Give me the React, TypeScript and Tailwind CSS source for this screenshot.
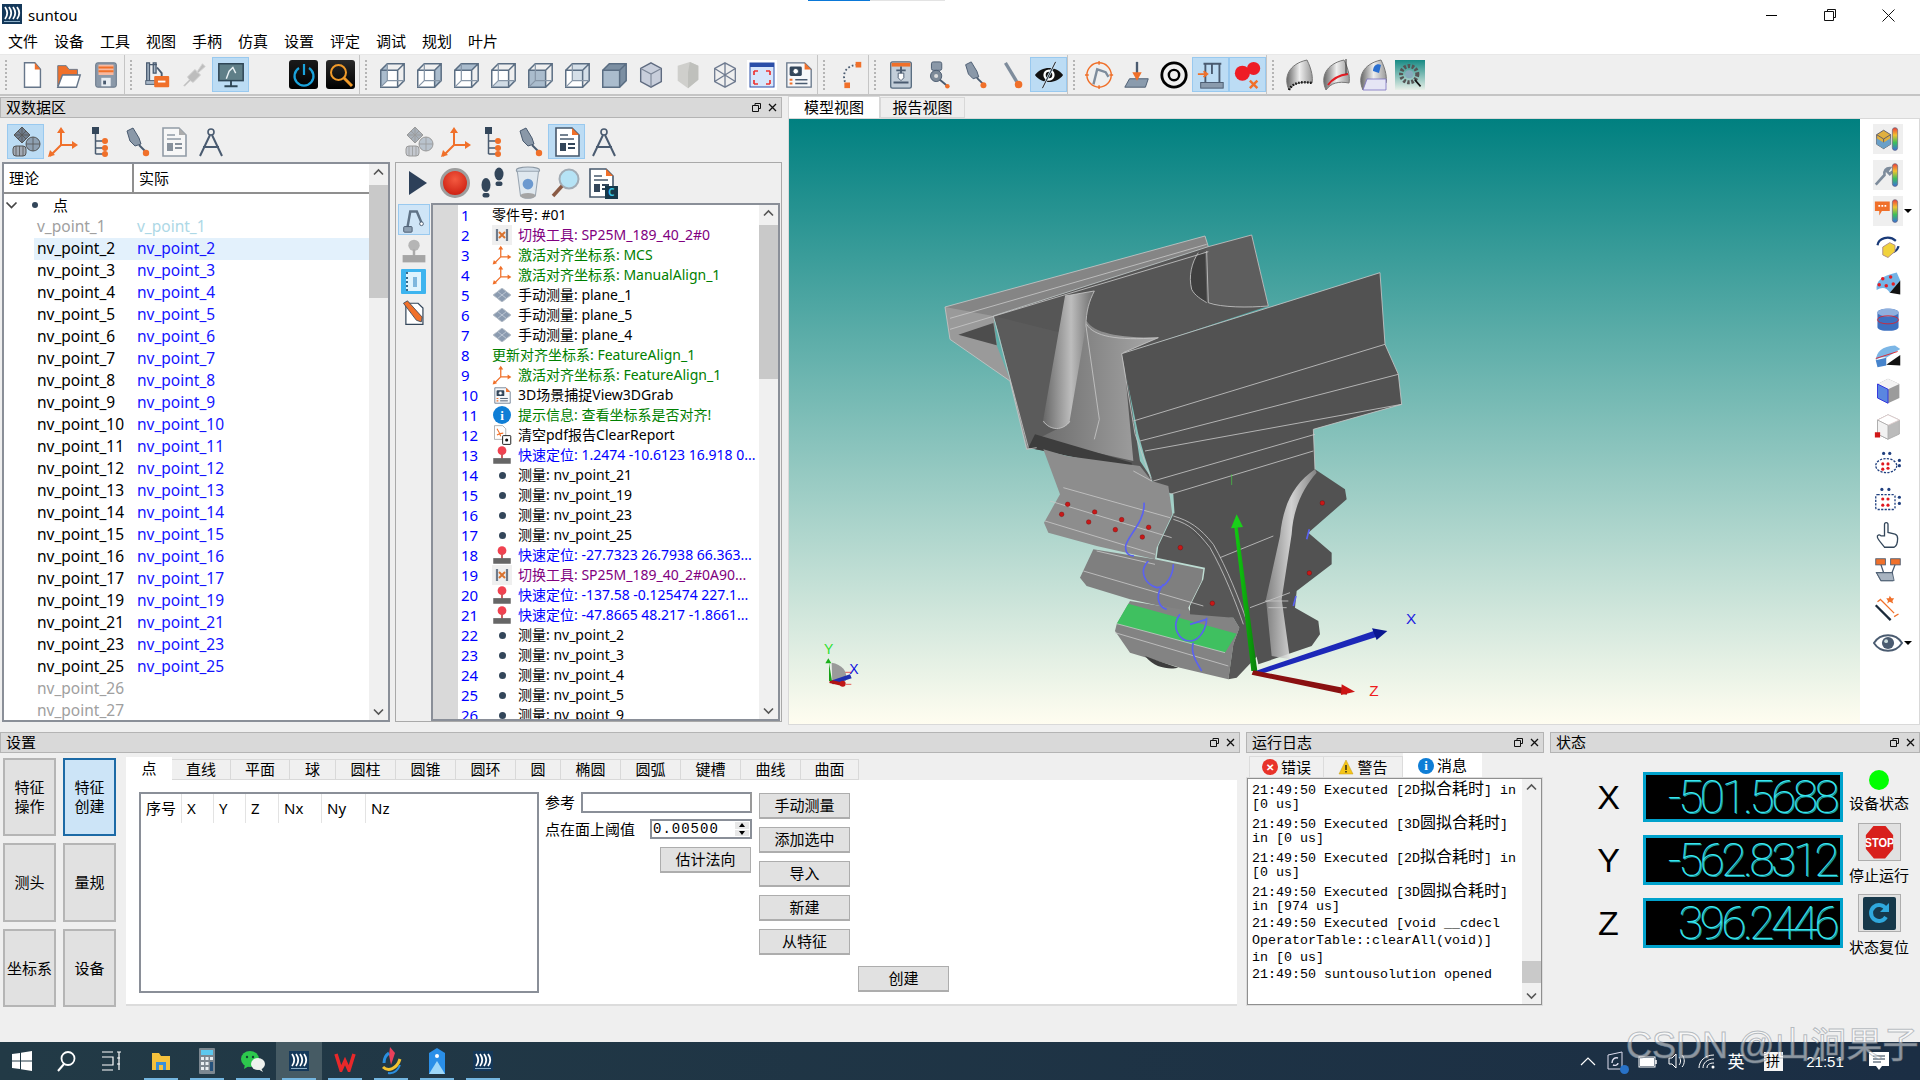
import type { ReactNode } from "react";

const slate = "#4a5b70";
const orange = "#f0702a";

function S({ s = 30, children }: { s?: number; children: ReactNode }) {
  return (
    <svg width={s} height={s} viewBox="0 0 32 32" fill="none">
      {children}
    </svg>
  );
}

// ---------- toolbar icons ----------
const NewDoc = () => (
  <S>
    <path d="M8 3h11l6 7v19H8z" fill="#fff" stroke="#66768a" strokeWidth="1.5" />
    <path d="M19 3l6 7h-6z" fill={orange} />
  </S>
);
const OpenDoc = () => (
  <S>
    <path d="M4 28V6h9l3 4h9v6H10z" fill={orange} stroke="#66768a" />
    <path d="M4 29l5-13h19l-4 13z" fill="#fff" stroke="#66768a" strokeWidth="1.5" />
  </S>
);
const SaveDoc = () => (
  <S>
    <rect x="5" y="3" width="22" height="26" rx="2" fill="#8b99a9" stroke="#5f6f82" />
    <rect x="8" y="5" width="16" height="11" fill="#f7b9a0" />
    <path d="M8 8h16M8 12h16" stroke={orange} strokeWidth="2" />
    <rect x="11" y="19" width="10" height="9" fill="#e8edf2" />
    <rect x="13" y="22" width="3" height="4" fill="#4a5b70" />
  </S>
);
const RobotTool = () => (
  <S>
    <path d="M5 3h3v20H5zM12 3h3v11h-3zM8 5h8" stroke={slate} strokeWidth="1.4" fill="#a9b8c8" />
    <path d="M16 8l5 6v4" stroke={slate} strokeWidth="2" />
    <rect x="4" y="22" width="10" height="4" fill="#a9b8c8" stroke={slate} />
    <rect x="13" y="17" width="16" height="12" rx="1" fill={orange} />
    <path d="M17 23h8" stroke="#fff" strokeWidth="2" />
  </S>
);
const Plug = () => (
  <S>
    <path d="M5 27l6-6-2-3 8-8 6 6-8 8-3-2-6 6zM19 13l6-9 3 3-8 7z" fill="#bdbdbd" stroke="#d2d2d2" />
  </S>
);
const MonitorArm = () => (
  <S>
    <rect x="3" y="4" width="26" height="18" fill="#5f7f88" stroke="#2f4656" strokeWidth="1.6" />
    <path d="M11 20l3-8 4-4 3 6M18 8l-4 4" stroke="#e9f2f5" strokeWidth="1.5" />
    <path d="M16 22v5M9 28h14" stroke="#2f4656" strokeWidth="2" />
  </S>
);
const PowerBtn = () => (
  <div className="w-[29px] h-[29px] rounded-[3px] bg-[linear-gradient(#1a1a1a,#000)] flex items-center justify-center">
    <svg width="26" height="26" viewBox="0 0 26 26" fill="none">
      <path d="M8 6a9.5 9.5 0 1 0 10 0" stroke="#1aa3dc" strokeWidth="2.2" />
      <path d="M13 2v11" stroke="#1aa3dc" strokeWidth="2.2" />
    </svg>
  </div>
);
const SearchBtn = () => (
  <div className="w-[29px] h-[29px] rounded-[3px] bg-[linear-gradient(#2a2a2a,#000)] flex items-center justify-center">
    <svg width="26" height="26" viewBox="0 0 26 26" fill="none">
      <circle cx="10.5" cy="10.5" r="7.5" stroke="#f09a2a" strokeWidth="2" />
      <path d="M16 16l8 8" stroke="#f09a2a" strokeWidth="3" />
    </svg>
  </div>
);
function Cube({ face }: { face: string }) {
  const fill = "#aabccd";
  return (
    <S>
      <path d="M4 11h18v18H4z" fill={face === "solid" || face === "front" ? fill : "#fff"} />
      {face === "left" && <path d="M4 11l7-7v18l-7 7z" fill={fill} />}
      {face === "right" && <path d="M22 11l7-7v18l-7 7z" fill={fill} />}
      {face === "top" && <path d="M4 11l7-7h18l-7 7z" fill={fill} />}
      {face === "bottom" && <path d="M4 29l7-7h18l-7 7z" fill="#d0dbe5" />}
      {face === "back" && <path d="M11 4h18v18H11z" fill="#d5dfe8" />}
      {face === "solid" && <path d="M4 11l7-7h18v18l-7 7V11z" fill="#7c8fa2" />}
      <path
        d="M4 11h18v18H4zM4 11l7-7h18v18l-7 7M22 11l7-7"
        stroke="#5b6e83"
        strokeWidth="1.6"
      />
      {face !== "solid" && <path d="M11 4v18h18M11 22l-7 7" stroke="#8796a7" strokeWidth="1.3" />}
    </S>
  );
}
const HexCube = () => (
  <S>
    <path d="M16 3l11 6v14l-11 6-11-6V9z" fill="#c8cedb" stroke="#5f6b80" strokeWidth="1.5" />
    <path d="M5 9l11 6 11-6M16 15v14" stroke="#7d8798" strokeWidth="1.2" />
  </S>
);
const Shield = () => (
  <S>
    <path d="M5 6l13-4 9 4v15l-11 9-11-8z" fill="#cfcfcc" />
    <path d="M18 2l9 4v15l-11 9V13z" fill="#bfc0bc" />
  </S>
);
const HexWire = () => (
  <S>
    <path d="M16 3l11 6v14l-11 6-11-6V9zM5 9l22 14M27 9L5 23M16 3v26" stroke="#6f7b90" strokeWidth="1.4" />
  </S>
);
const FitWin = () => (
  <div className="w-[30px] h-[30px] bg-white flex items-center justify-center">
    <svg width="26" height="26" viewBox="0 0 26 26" fill="none">
      <rect x="1" y="1" width="24" height="24" fill="#d8e6fb" stroke="#2b4ea8" />
      <rect x="1" y="1" width="24" height="4" fill="#2b4ea8" />
      <path d="M5 9h4M5 9v4M21 9h-4M21 9v4M5 22h4M5 22v-4M21 22h-4M21 22v-4" stroke="#ee3333" strokeWidth="1.7" />
    </svg>
  </div>
);
const CamDoc = ({ s = 30 }: { s?: number }) => (
  <S s={s}>
    <path d="M3 3h19l7 7v19H3z" fill="#f6f7f9" stroke="#66768a" strokeWidth="1.4" />
    <path d="M22 3l7 7h-7z" fill={orange} />
    <rect x="6" y="7" width="13" height="10" rx="1.5" fill="#33465a" />
    <circle cx="12.5" cy="12" r="3" fill="#fff" stroke="#33465a" />
    <path d="M12 21h13M12 25h13" stroke={slate} strokeWidth="1.6" />
    <path d="M6 21h3M6 25h3" stroke={orange} strokeWidth="2" />
  </S>
);
const CurveDots = () => (
  <S>
    <path d="M24 5C12 6 6 14 12 27" stroke={slate} strokeWidth="2" strokeDasharray="1.8 2.4" />
    <rect x="22" y="2" width="6" height="6" fill={orange} />
    <rect x="10" y="24" width="6" height="6" fill={orange} />
  </S>
);
const Cmm = () => (
  <S>
    <rect x="5" y="2" width="22" height="28" rx="2" fill="#c3ced9" stroke="#566a7e" strokeWidth="1.4" />
    <rect x="6" y="3" width="20" height="4" fill={orange} />
    <path d="M16 7v13M11 11h10M8 24h16" stroke={slate} strokeWidth="2" />
    <path d="M13 14h6v5l-3 3-3-3z" fill="#fff" stroke={slate} />
  </S>
);
const ProbeA = () => (
  <S>
    <rect x="9" y="2" width="11" height="9" rx="2" fill="#8a98a8" stroke="#4a5b70" />
    <circle cx="14" cy="17" r="6" fill="#7d8a98" stroke="#4a5b70" />
    <circle cx="14" cy="17" r="2.2" fill="#ddd" />
    <path d="M18 21l7 6" stroke="#4a5b70" strokeWidth="2" />
    <circle cx="26" cy="28" r="2.4" fill={orange} />
  </S>
);
const ProbeB = ({ s = 30 }: { s?: number }) => (
  <S s={s}>
    <path d="M6 5l6-3 6 10 2 6-6 2-5-5z" fill="#8a98a8" stroke="#4a5b70" />
    <path d="M18 19l6 6" stroke="#4a5b70" strokeWidth="2" />
    <circle cx="25" cy="27" r="3.2" fill={orange} />
  </S>
);
const ProbeC = () => (
  <S>
    <path d="M9 3l12 20" stroke="#7e8c9c" strokeWidth="3.5" />
    <circle cx="23" cy="26" r="4" fill={orange} />
  </S>
);
const EyeSlash = () => (
  <S>
    <path d="M1 16c7-10 23-10 30 0-7 10-23 10-30 0z" fill="#111" />
    <circle cx="16" cy="16" r="6" fill="#fff" />
    <circle cx="16" cy="16" r="3.5" fill="#111" />
    <path d="M23 2L9 30" stroke="#cfe4f6" strokeWidth="2.5" />
    <path d="M23 2L9 30" stroke="#111" strokeWidth="1" />
  </S>
);
const CircleArm = () => (
  <S>
    <circle cx="15" cy="16" r="13" stroke={orange} strokeWidth="1.5" />
    <path d="M15 1v4M15 27v4M0 16h4M26 16h4" stroke={orange} strokeWidth="1.5" />
    <path d="M9 26l4-16 9 3 3 5" stroke="#7e8c9c" strokeWidth="2.5" />
  </S>
);
const DownPlane = () => (
  <S>
    <path d="M8 20h20l-3 9H3z" fill="#8a9bad" stroke="#4a5b70" />
    <path d="M16 2v17" stroke={slate} strokeWidth="2.5" />
    <path d="M11 13h10l-5 9z" fill={orange} />
  </S>
);
const Rings = () => (
  <S>
    <circle cx="16" cy="16" r="13" stroke="#000" strokeWidth="3" />
    <circle cx="16" cy="16" r="5.5" stroke="#000" strokeWidth="2.6" />
  </S>
);
const CmmArrow = () => (
  <S>
    <rect x="5" y="24" width="24" height="6" fill="#8a9bad" stroke="#4a5b70" />
    <path d="M10 24V4h15v20M8 4h19" stroke={slate} strokeWidth="2" />
    <path d="M17 4v11" stroke={slate} strokeWidth="2" />
    <path d="M2 15h9M8 12l4 3-4 3" stroke={orange} strokeWidth="2" />
  </S>
);
const RedX = () => (
  <S>
    <circle cx="10" cy="14" r="8" fill="#ee1c25" />
    <circle cx="22" cy="9" r="7" fill="#ee1c25" />
    <path d="M18 22l8 8M26 22l-8 8" stroke={orange} strokeWidth="2.6" />
  </S>
);
const Blade = ({ accent }: { accent: string }) => (
  <S s={32}>
    <path d="M6 31C0 18 6 5 24 1c5 10 6 18 5 23C18 22 11 24 6 31z" fill="url(#bladeGrad)" stroke="#777" />
    {accent === "dots" && <path d="M6 31c3-7 12-9 23-7" stroke="#111" strokeWidth="2.4" strokeDasharray="1.5 1.5" />}
    {accent === "red" && <path d="M8 26c5-7 12-10 20-11" stroke="#e31b23" strokeWidth="2" />}
    {accent === "red" && <path d="M26 0v15" stroke="#333" strokeWidth="1" />}
    {accent === "blue" && <path d="M16 12c0-5 4-8 8-6l-2 8z" fill="#2a6fd0" />}
    {accent === "blue" && <path d="M6 31h23V20H10z" fill="#e5e5f5" stroke="#7a6fc0" strokeWidth="0.8" />}
  </S>
);
const GearScan = () => (
  <div className="w-[30px] h-[30px] bg-[linear-gradient(#178a84,#e8efe8)] flex items-center justify-center">
    <svg width="26" height="26" viewBox="0 0 32 32" fill="none">
      <circle cx="15" cy="15" r="10" stroke="#555" strokeWidth="5" strokeDasharray="3 2" />
      <circle cx="15" cy="15" r="5" fill="#8ab" />
      <path d="M22 22l7 8" stroke="#111" strokeWidth="2" />
    </svg>
  </div>
);

// ---------- dock icons ----------
const DataIco = ({ dim = false }: { dim?: boolean }) => (
  <S s={32}>
    <g opacity={dim ? 0.55 : 1} stroke="#555">
      <path d="M12 1l8 8-8 8-8-8z" fill="#6f7d8e" />
      <path d="M4 9l8 0 8 0M12 1v16M8 5l8 8M16 5l-8 8" strokeWidth="0.8" />
      <circle cx="23" cy="18" r="7" fill="#8ea0b2" />
      <path d="M16 18h14M23 11v14" strokeWidth="0.8" />
      <rect x="3" y="20" width="13" height="10" rx="3" fill="#a2aab5" />
      <path d="M6 20v10M9.5 20v10M13 20v10" strokeWidth="0.8" />
    </g>
  </S>
);
const AxisIco = ({ s = 32 }: { s?: number }) => (
  <S s={s}>
    <path d="M14 19V4M14 19h15M14 19L3 30" stroke={orange} strokeWidth="2" />
    <path d="M14 1l-4 6h8zM31 19l-6-4v8zM1 31l7-2-5-5z" fill={orange} />
  </S>
);
const TreeIco = () => (
  <S s={32}>
    <rect x="8" y="1" width="7" height="7" fill="#33465a" />
    <path d="M11.500 8v20M11.500 15h8M11.500 22h8M11.500 28h8" stroke={slate} strokeWidth="1.5" />
    <circle cx="21" cy="15" r="3" fill={orange} />
    <circle cx="21" cy="22" r="3" fill={orange} />
    <circle cx="21" cy="28" r="3" fill={orange} />
  </S>
);
const ReportIco = ({ dim = false }: { dim?: boolean }) => (
  <S s={32}>
    <g opacity={dim ? 0.55 : 1}>
      <path d="M5 2h16l7 7v21H5z" fill="#fff" stroke="#46586c" strokeWidth="1.6" />
      <path d="M21 2l7 7h-7z" fill={dim ? "#777" : orange} />
      <path d="M9 9h8M9 13h14" stroke="#46586c" strokeWidth="1.6" />
      <rect x="9" y="17" width="6" height="8" fill="#33465a" />
      <path d="M17 18h7M17 22h7" stroke="#33465a" strokeWidth="2" />
    </g>
  </S>
);
const CompassIco = () => (
  <S s={32}>
    <circle cx="16" cy="6" r="3" stroke={slate} strokeWidth="1.6" />
    <path d="M15 9L5 30M17 9l10 21M8 21h16" stroke={slate} strokeWidth="2" />
  </S>
);
const RunReport = () => (
  <div className="relative w-[30px] h-[32px] ml-[-5px]">
    <ReportIco />
    <div className="absolute right-[-3px] bottom-0 w-[13px] h-[13px] bg-[#16384a] text-[#35c3e8] text-[10px] leading-[13px] text-center font-bold">C</div>
  </div>
);
const RecBtn = () => (
  <div className="w-[30px] h-[30px] rounded-full border-[3px] border-[#9d9d9d] bg-[radial-gradient(circle_at_50%_35%,#f45a40,#c51308)]" />
);
const Steps = () => (
  <S s={32}>
    <g fill="#33465a">
      <ellipse cx="10" cy="18" rx="4.500" ry="7" />
      <rect x="6.500" y="26" width="7" height="4.500" rx="2" />
      <ellipse cx="23" cy="7" rx="4.500" ry="6.500" />
      <rect x="19.500" y="14.500" width="7" height="4.500" rx="2" />
    </g>
  </S>
);
const Bin = () => (
  <S s={34}>
    <ellipse cx="15" cy="4" rx="11" ry="3" fill="#cfdbe6" stroke="#8c98a4" />
    <path d="M5 5l3 23c3 3 11 3 14 0l3-23z" fill="#dfe8ef" stroke="#9aa6b2" />
    <circle cx="15" cy="17" r="5" fill="#3b78c2" opacity="0.7" />
    <ellipse cx="15" cy="28" rx="7" ry="2.500" fill="#a5a5a5" />
  </S>
);
const Mag = () => (
  <S s={32}>
    <circle cx="19" cy="12" r="9.500" fill="#b6e3f5" stroke="#a2acb5" strokeWidth="2" />
    <path d="M12 19L3 29" stroke="#8a5a44" strokeWidth="3.500" />
  </S>
);
const ArmIco = () => (
  <S s={30}>
    <path d="M9 24l3-17 7 0 5 12" stroke="#5f7286" strokeWidth="2.6" />
    <circle cx="24" cy="20" r="2" fill="#fff" stroke={slate} />
    <rect x="5" y="23" width="9" height="6" rx="1" fill="#8da0b3" stroke={slate} />
  </S>
);
const Joy = ({ s = 20, red = false }: { s?: number; red?: boolean }) => (
  <S s={s}>
    <circle cx="16" cy="9" r="7" fill={red ? "#f04250" : "#b5b5b5"} />
    <rect x="14.500" y="14" width="3" height="8" fill={red ? "#c55" : "#aaa"} />
    <rect x="2" y="21" width="28" height="9" fill={red ? "#666" : "#a5a5a5"} />
  </S>
);
const BookIco = () => (
  <div className="w-[25px] h-[25px] bg-[#3db4ef] rounded-[1px] flex items-center justify-center">
    <div className="w-[15px] h-[19px] bg-[#dff3fd] border-l-2 border-dotted border-[#3a6a8a] flex items-center justify-center">
      <div className="w-[4px] h-[10px] bg-[#7fb7dd]" />
    </div>
  </div>
);
const PencilDoc = () => (
  <S s={26}>
    <path d="M6 4h15l6 6v20H6z" fill="#fff" stroke="#33465a" strokeWidth="1.5" />
    <path d="M3 4l5-3 18 20-1 6-6-2z" fill={orange} stroke="#33465a" />
  </S>
);
const ToolSwap = () => (
  <div className="w-[20px] h-[20px] bg-[#efefef] flex items-center justify-center">
    <svg width="14" height="14" viewBox="0 0 14 14" fill="none">
      <path d="M2 1v12M12 1v12" stroke="#6d7a8a" strokeWidth="2.200" />
      <path d="M4 4l6 6M10 4l-6 6" stroke="#d9722e" strokeWidth="2" />
    </svg>
  </div>
);
const PlaneIco = () => (
  <S s={20}>
    <path d="M16 5L30 16 16 27 2 16z" fill="#8b9bb0" stroke="#5a6a7c" />
    <path d="M9 10.500l14 11M16 5l14 11M23 10.500l-14 11M2 16l14 11M16 5L2 16M30 16L16 27" stroke="#dfe5ec" strokeWidth="0.9" />
  </S>
);
const InfoIco = ({ s = 18 }: { s?: number }) => (
  <div
    className="rounded-full bg-[#0f7ed6] text-white font-bold flex items-center justify-center text-[13px] leading-none [font-family:'Liberation_Serif',serif]"
    style={{ width: s, height: s }}
  >
    i
  </div>
);
const PdfIco = () => (
  <S s={20}>
    <path d="M4 1h13l5 5v17H4z" fill="#fff" stroke="#888" />
    <path d="M8 6c4 6 5 9 6 12M8 16c3-2 6-3 10-3" stroke={orange} strokeWidth="1.800" />
    <rect x="17" y="17" width="13" height="14" rx="1" fill="#fff" stroke="#111" strokeWidth="1.500" />
    <circle cx="23.500" cy="24" r="2.500" fill="#111" />
  </S>
);
const Dot = () => <div className="w-[7px] h-[7px] rounded-full bg-[#33465a]" />;

// ---------- view toolbar icons ----------
const Rainbow = () => (
  <rect x="21" y="3" width="6" height="26" rx="3" fill="url(#rainbowGrad)" stroke="#667" strokeWidth="0.8" />
);
const ViewIcons: { el: ReactNode; bg?: boolean; drop?: boolean }[] = [
  { el: <S s={28}><path d="M3 11l8-5 8 5v11l-8 5-8-5z" fill="#e0b040" stroke="#556" /><path d="M3 11l8 5 8-5M11 16v11" stroke="#556" /><path d="M3 15l8 5 8-5v7l-8 5-8-5z" fill="#6aa0c8" /><Rainbow /></S>, bg: true },
  { el: <S s={28}><path d="M5 27l10-11c-1-5 2-8 6-8l-3 4 3 3 3-3" stroke="#7e8c9c" strokeWidth="3" transform="translate(-3 0)" /><Rainbow /></S>, bg: true },
  { el: <S s={28}><path d="M1 5h17v11H9l-3 5v-5H1z" fill={orange} /><path d="M5 10h9" stroke="#fff" strokeWidth="2" strokeDasharray="2 1.500" /><Rainbow /></S>, bg: true, drop: true },
  { el: <S s={28}><path d="M4 14C5 6 17 2 25 9" stroke="#1a3a78" strokeWidth="2.500" /><path d="M28 15c-1 6-8 9-14 7" stroke="#1a3a78" strokeWidth="2.500" /><path d="M10 16l8-5 6 3v7l-8 7-6-3z" fill="#f1d23c" stroke="#a88" /></S> },
  { el: <S s={28}><path d="M3 24C2 14 8 8 26 4l4 9-12 14c-3-6-9-7-15-3z" fill="#74b4e6" /><path d="M18 27l12-14v16z" fill="#111" /><g fill="#e51c23"><circle cx="10" cy="11" r="2" /><circle cx="19" cy="9" r="2" /><circle cx="14" cy="19" r="2" /><circle cx="22" cy="17" r="2" /><circle cx="6" cy="18" r="2" /></g></S> },
  { el: <S s={26}><path d="M3 8c0-6 26-6 26 0v18c0 6-26 6-26 0z" fill="#3d70c0" /><ellipse cx="16" cy="8" rx="13" ry="5" fill="#8fb0de" /><ellipse cx="16" cy="17" rx="13" ry="5" stroke="#e51c23" /></S> },
  { el: <S s={28}><path d="M2 22C3 12 9 6 24 5l6 4-16 10c-4-1-9 0-12 3z" fill="#7cb6e6" /><path d="M2 22l2 8 10-2v-9z" fill="#4684cc" /><path d="M14 27l16-11v12z" fill="#111" /><path d="M2 20l25-8" stroke="#e51c23" /></S> },
  { el: <S s={28}><path d="M16 2l13 6v16l-13 6-12-6V8z" fill="#9b9b9b" /><path d="M4 8l12-6 13 6-13 6z" fill="#f3f3f3" /><path d="M4 8l12 6v16l-12-6z" fill="#5a86e0" stroke="#2a2ae0" /></S> },
  { el: <S s={28}><path d="M16 2l13 6v16l-13 6-12-6V8z" fill="#bbb" stroke="#aaa" /><path d="M4 8l12-6 13 6-13 6z" fill="#fff" stroke="#dcc" /><path d="M4 8l12 6v16l-12-6z" fill="#f2f2f2" stroke="#aaa" /><rect x="1" y="22" width="6" height="6" fill="#d01818" /></S> },
  { el: <S s={28}><ellipse cx="14" cy="19" rx="12" ry="8" stroke="#1f3f7f" strokeWidth="1.500" strokeDasharray="2.500 1.500" /><g fill="#e01820"><circle cx="10" cy="17" r="1.800" /><circle cx="16" cy="17" r="1.800" /><circle cx="10" cy="23" r="1.800" /><circle cx="16" cy="22" r="1.800" /></g><g fill="#1f3f7f"><circle cx="11" cy="5" r="1.800" /><circle cx="18" cy="5" r="1.800" /><circle cx="29" cy="13" r="1.800" /><circle cx="29" cy="19" r="1.800" /></g></S> },
  { el: <S s={28}><rect x="2" y="11" width="22" height="17" rx="2" stroke="#1f3f7f" strokeWidth="1.500" strokeDasharray="2.500 1.500" /><g fill="#e01820"><circle cx="10" cy="16" r="1.800" /><circle cx="16" cy="16" r="1.800" /><circle cx="10" cy="23" r="1.800" /><circle cx="16" cy="23" r="1.800" /></g><g fill="#1f3f7f"><circle cx="9" cy="5" r="1.800" /><circle cx="17" cy="5" r="1.800" /><circle cx="29" cy="14" r="1.800" /><circle cx="29" cy="21" r="1.800" /></g></S> },
  { el: <S s={28}><path d="M12 17V4c0-3 4-3 4 0v9l8 2c3 1 3 3 3 5 0 5-2 9-4 10H12c-2-3-7-8-8-11-1-3 2-4 4-2z" fill="#fff" stroke="#33465a" strokeWidth="1.500" /></S> },
  { el: <S s={28}><rect x="2" y="2" width="11" height="7" fill={orange} stroke="#4a5b70" /><rect x="19" y="2" width="11" height="7" fill={orange} stroke="#4a5b70" /><path d="M8 9l3 9M24 9l-5 13M3 18h18v9H8z" stroke="#4a5b70" strokeWidth="1.500" /><path d="M3 18l5 9h15l-2-9z" fill="#a8b4c1" stroke="#4a5b70" /></S> },
  { el: <S s={28}><path d="M2 14l17 17" stroke="#1b2b3a" strokeWidth="2.600" /><path d="M8 8l15 15M4 10l4-3M23 27l5-3" stroke={orange} strokeWidth="1.500" /><path d="M18 3l2 3 3 0-2 3 1 3-4-2-3 2 1-3-2-3h3z" fill={orange} /></S> },
  { el: <S s={30}><path d="M1 16c7-11 23-11 30 0-7 11-23 11-30 0z" fill="#fff" stroke="#4a5b70" strokeWidth="2" /><circle cx="16" cy="16" r="6.500" fill="#4a5b70" /><circle cx="14" cy="14" r="2" fill="#cdd" /></S>, drop: true },
];

// ---------- taskbar icons ----------
const SunLogo = ({ s = 20 }: { s?: number }) => (
  <svg width={s} height={s} viewBox="0 0 20 20" fill="none">
    <rect width="20" height="20" fill="#14385a" />
    <path d="M3 3c3 4 3 8 0 12M7 3c3 4 3 8 0 12M11 3c3 4 3 8 0 12M15 3c3 4 3 8 0 12" stroke="#fff" strokeWidth="1.800" />
    <rect x="2" y="17" width="16" height="1" fill="#8fb0c8" />
  </svg>
);

function Tool({ children, on = false, w = "w-[37px]" }: { children?: ReactNode; on?: boolean; w?: string }) {
  return (
    <div
      className={`${w} h-[35px] flex items-center justify-center shrink-0 ${on ? "bg-[#bcdcf4] border border-[#99c9ef]" : ""}`}
    >
      {children}
    </div>
  );
}
const Handle = () => <div className="w-[2px] h-[30px] ml-[5px] mr-[6px] border-l-2 border-dotted border-[#b5b5b5] shrink-0" />;
const Sep = () => <div className="w-[1px] h-[40px] bg-[#c5c5c5] shrink-0" />;

function DockTitle({ title, w, icons = true }: { title: string; w: string; icons?: boolean }) {
  return (
    <div className={`${w} h-[21px] bg-[#d9d9d9] border border-[#b4b4b4] flex items-center pl-[5px] shrink-0`}>
      <span className="text-[15px] leading-none">{title}</span>
      {icons && (
        <div className="ml-auto flex items-center gap-[7px] pr-[4px]">
          <svg width="9" height="9" viewBox="0 0 9 9" fill="none">
            <path d="M3 2V.5h5.500v5H7M.5 2.500h6v6h-6z" stroke="#111" />
          </svg>
          <svg width="9" height="9" viewBox="0 0 9 9" fill="none">
            <path d="M1 1l7 7M8 1L1 8" stroke="#111" strokeWidth="1.300" />
          </svg>
        </div>
      )}
    </div>
  );
}

function ScrollBar({ top, h }: { top: number; h: number }) {
  return (
    <div className="w-[19px] h-full bg-[#f0f0f0] relative shrink-0">
      <svg className="absolute left-[4px] top-[4px]" width="11" height="8" viewBox="0 0 11 8" fill="none">
        <path d="M1 6.500l4.500-4.500 4.500 4.500" stroke="#555" strokeWidth="1.600" />
      </svg>
      <div className="absolute left-0 right-0 bg-[#c9c9c9]" style={{ top, height: h }} />
      <svg className="absolute left-[4px] bottom-[4px]" width="11" height="8" viewBox="0 0 11 8" fill="none">
        <path d="M1 1.500l4.500 4.500 4.500-4.500" stroke="#555" strokeWidth="1.600" />
      </svg>
    </div>
  );
}

const points = [2, 3, 4, 5, 6, 7, 8, 9, 10, 11, 12, 13, 14, 15, 16, 17, 19, 21, 23, 25];

type Row = { t: string; c: string; i?: ReactNode };
const black = "text-black";
const green = "text-[#008000]";
const blue = "text-[#0000ff]";
const purple = "text-[#800080]";
const probe = <Joy red />;
const rows: Row[] = [
  { t: "零件号:  #01", c: black },
  { t: "切换工具: SP25M_189_40_2#0", c: purple, i: <ToolSwap /> },
  { t: "激活对齐坐标系: MCS", c: green, i: <AxisIco s={20} /> },
  { t: "激活对齐坐标系: ManualAlign_1", c: green, i: <AxisIco s={20} /> },
  { t: "手动测量: plane_1", c: black, i: <PlaneIco /> },
  { t: "手动测量: plane_5", c: black, i: <PlaneIco /> },
  { t: "手动测量: plane_4", c: black, i: <PlaneIco /> },
  { t: "更新对齐坐标系: FeatureAlign_1", c: green },
  { t: "激活对齐坐标系: FeatureAlign_1", c: green, i: <AxisIco s={20} /> },
  { t: "3D场景捕捉View3DGrab", c: black, i: <CamDoc s={19} /> },
  { t: "提示信息: 查看坐标系是否对齐!", c: green, i: <InfoIco /> },
  { t: "清空pdf报告ClearReport", c: black, i: <PdfIco /> },
  { t: "快速定位: 1.2474 -10.6123 16.918 0...", c: blue, i: probe },
  { t: "测量: nv_point_21", c: black, i: <Dot /> },
  { t: "测量: nv_point_19", c: black, i: <Dot /> },
  { t: "测量: nv_point_23", c: black, i: <Dot /> },
  { t: "测量: nv_point_25", c: black, i: <Dot /> },
  { t: "快速定位: -27.7323 26.7938 66.363...", c: blue, i: probe },
  { t: "切换工具: SP25M_189_40_2#0A90...", c: purple, i: <ToolSwap /> },
  { t: "快速定位: -137.58 -0.125474 227.1...", c: blue, i: probe },
  { t: "快速定位: -47.8665 48.217 -1.8661...", c: blue, i: probe },
  { t: "测量: nv_point_2", c: black, i: <Dot /> },
  { t: "测量: nv_point_3", c: black, i: <Dot /> },
  { t: "测量: nv_point_4", c: black, i: <Dot /> },
  { t: "测量: nv_point_5", c: black, i: <Dot /> },
  { t: "测量: nv_point_9", c: black, i: <Dot /> },
];

const featureTabs: [string, string][] = [
  ["直线", "w-[59px]"],
  ["平面", "w-[59px]"],
  ["球", "w-[46px]"],
  ["圆柱", "w-[60px]"],
  ["圆锥", "w-[60px]"],
  ["圆环", "w-[60px]"],
  ["圆", "w-[45px]"],
  ["椭圆", "w-[60px]"],
  ["圆弧", "w-[60px]"],
  ["键槽", "w-[60px]"],
  ["曲线", "w-[60px]"],
  ["曲面", "w-[58px]"],
];

const tableCols: [string, string][] = [
  ["序号", "w-[41px]"],
  ["X", "w-[32px]"],
  ["Y", "w-[32px]"],
  ["Z", "w-[33px]"],
  ["Nx", "w-[43px]"],
  ["Ny", "w-[44px]"],
  ["Nz", "w-[60px]"],
];

const C = ({ children }: { children: ReactNode }) => (
  <span className="text-[16px] leading-none [font-family:'Noto_Sans_CJK_SC',sans-serif]">{children}</span>
);

const logLines: ReactNode[] = [
  <>21:49:50 Executed [2D<C>拟合耗时</C>] in</>,
  "[0 us]",
  <>21:49:50 Executed [3D<C>圆拟合耗时</C>]</>,
  "in [0 us]",
  <>21:49:50 Executed [2D<C>拟合耗时</C>] in</>,
  "[0 us]",
  <>21:49:50 Executed [3D<C>圆拟合耗时</C>]</>,
  "in [974 us]",
  "21:49:50 Executed [void __cdecl",
  "OperatorTable::clearAll(void)]",
  "in [0 us]",
  "21:49:50 suntousolution opened",
];

function FormBtn({ label, w = "w-[91px]" }: { label: string; w?: string }) {
  return (
    <div className={`${w} h-[26px] bg-[#e1e1e1] border border-[#adadad] border-b-2 flex items-center justify-center text-[15px] leading-none shrink-0`}>
      {label}
    </div>
  );
}

function SideBtn({ label, on = false }: { label: ReactNode; on?: boolean }) {
  return (
    <div
      className={`flex items-center justify-center text-center text-[15px] leading-[19px] border-2 ${
        on ? "bg-[#cce4f7] border-[#1c6aa6]" : "bg-[#e1e1e1] border-[#b5b5b5]"
      }`}
    >
      {label}
    </div>
  );
}

// model in zoomed coordinates (3x, origin 900,230)
function Model() {
  const dots = [[503, 820], [485, 850], [584, 843], [566, 873], [665, 866], [646, 896], [746, 889], [727, 918], [841, 950], [937, 1117], [1267, 816], [1228, 1026]];
  return (
    <g transform="translate(900 230) scale(0.33333)">
      <path d="M135 228L915 15l10 32L280 255l10 88-115-32-25 14z" fill="#858585" />
      <path d="M135 228l15 97 180 125 50 205 30-5L290 343 280 255z" fill="#9a9a9a" />
      <path d="M175 311l105-35 10 67z" fill="#4d4d4d" />
      <path d="M280 255L925 47l130-35 50 213-435 143 50 322 40 60-355-125z" fill="#565656" />
      <path d="M925 47l130-35 50 213c-60 10-150 5-190-20-30-20-50-80-15-130z" fill="#5e5e5e" />
      <path d="M895 65c-20 30-30 70-20 110 10 20 30 30 45 40l-5-150z" fill="#3f3f3f" />
      <path d="M283 255l100 395 310 55 -25-337c-50 10-110 0-108-44z" fill="#5b5b5b" />
      <path d="M560 270c20 35 90 50 215 50l-105 45 30 325-290-65 90-45z" fill="url(#coneGrad)" />
      <path d="M495 195l88-15c-15 30-25 60-25 105l-50 290c-30 30-60 15-80 0z" fill="url(#cylGrad)" />
      <path d="M385 650l20-40 290 85v20z" fill="#3d3d3d" />
      <path d="M665 368L1440 125l15 215 40 90 10 90-265 75 5 120 90 60 5 30-115 100 70 60 0 35-105 80-5 50 70 40 5 40-25 35-160 55-30-130-85-160-135-140-5-80-55-20-30-90-20-70z" fill="#525252" />
      <path d="M430 655l70 20 220 30 35 45 50 15 12 85-47 100-5 35-175-40-145-40-13-30 48-85z" fill="#8d8d8d" />
      <path d="M580 955l185 30 145 30-5 35-40 80 5 15-180-40-130-40-20-25z" fill="#7f7f7f" />
      <path d="M690 1110l310 50 18 30-18 50-15 105-145-35-150-45-45-65 5-20z" fill="#838383" />
      <path d="M685 1118l325 90-35 57-325-87z" fill="#3fc060" />
      <path d="M735 1275c30 40 80 40 100 35l-60-20z" fill="#3d3d3d" />
      <path d="M1010 1340l-25 5 15-105 18-50-18-30-130-10 0-25 40-80 5-35-145-30 5-35 47-100 135 140 85 160 30 130z" fill="#575757" />
      <path d="M1245 715C1180 760 1150 820 1140 915L1098 1105L1115 1275L1170 1285L1145 1105L1175 910C1180 830 1210 770 1250 725z" fill="url(#tubeGrad)" opacity="0.85" />
      <g stroke="#c6c6c6" strokeWidth="2.500" fill="none">
        <path d="M135 228L915 15M925 47l130-35 50 213M915 15l10 32M150 262L920 40M150 295L925 62M280 255L925 47" />
        <path d="M135 228l15 97 180 125 50 205 30-5M280 255l105 395M665 368L1440 125l15 215 40 90 10 90-265 75 5 120" />
        <path d="M700 570L1455 340M720 630L1495 430M735 660L1505 520M760 750L1245 610M810 790L1240 660" />
        <path d="M665 368l40 240 50 142-55-30M560 280c20 35 90 50 215 40l-105 45M495 195l88-15c-15 30-25 60-25 105l40 280-15 60M430 570c20 30 60 30 80 0" />
        <path d="M450 810l365 110M435 870l330 100M550 1020l360 105M650 1178l325 87M645 1205l340 100M490 770l320 90M590 960l175 40" />
        <path d="M820 855c50 15 80 35 120 85 40 70 80 170 100 230M820 865c50 15 70 35 110 85 40 70 80 170 100 230" />
        <path d="M960 980l160-65M1050 1130l120-45M895 65c-20 30-30 70-20 110 10 20 30 30 45 40M920 60l5 155c40 15 120 15 180 10" />
        <path d="M1095 1110h70M1105 1130h55" />
      </g>
      <g stroke="#5a62f0" strokeWidth="5" fill="none">
        <path d="M732 815c5 60-60 110-55 135 0 20 15 25 25 25M745 990c-30 30-10 70 25 80 30 0 50-40 50-70M790 1060c-30 40-10 70 10 75M840 1150c-30 40 0 80 30 80 30 0 50-40 50-70M880 1235c-10 30 10 60 25 85M870 1180l50-15" />
        <path d="M1228 895l-8 30M1188 1095l-8 30" />
      </g>
      <g>
        {dots.map(([x, y]) => (
          <circle key={`${x}-${y}`} cx={x} cy={y} r="7" fill="#c81818" stroke="#600" strokeWidth="1" />
        ))}
      </g>
      <path d="M1012 880l-10 0 52 440 18 0z" fill="url(#greenGrad)" />
      <path d="M1010 850l-17 42 36-4z" fill="#19d019" />
      <path d="M1060 1322l370-125 8 18-368 118z" fill="#1c28b8" />
      <path d="M1462 1200l-46-8 14 35z" fill="#0a1690" />
      <path d="M1060 1318l285 55-5 18-285-60z" fill="#8a1010" />
      <path d="M1365 1382l-40-22-2 32z" fill="#cc1414" />
      <text x="1518" y="1178" fontSize="46" fill="#2020e0" fontFamily="Liberation Sans">X</text>
      <text x="1408" y="1395" fontSize="46" fill="#ee1c1c" fontFamily="Liberation Sans">Z</text>
      <path d="M995 730v32" stroke="#44d044" strokeWidth="2" />
    </g>
  );
}

function Triad() {
  return (
    <g transform="translate(780 610) scale(0.33333)">
      <path d="M155 155c30 5 50 25 42 55l-40 10z" fill="#9a9a9a" />
      <path d="M150 210l60-20 5 12-55 18z" fill="#2030b0" />
      <path d="M150 206l45 10-5 10-42-10z" fill="#b01414" />
      <circle cx="188" cy="218" r="9" fill="#c01818" />
      <path d="M147 155l9 55h-9z" fill="#18a018" />
      <path d="M145 142l-9 15h18z" fill="#18b018" />
      <text x="132" y="128" fontSize="42" fill="#2ee02e" fontFamily="Liberation Sans">Y</text>
      <text x="208" y="190" fontSize="42" fill="#1010e0" fontFamily="Liberation Sans">X</text>
      <path d="M196 184h18M198 220h16" stroke="#e01010" strokeWidth="2" />
    </g>
  );
}

const taskIcons: { key: string; el: ReactNode; on?: boolean }[] = [
  { key: "files", el: <svg width="22" height="22" viewBox="0 0 22 22"><path d="M2 3h7l2 3h9v14H2z" fill="#f5c13c" /><rect x="6" y="12" width="10" height="8" fill="#3a8fd8" /><rect x="9" y="15" width="4" height="5" fill="#f5c13c" /></svg> },
  { key: "calc", el: <svg width="16" height="26" viewBox="0 0 16 26"><rect width="16" height="26" rx="1" fill="#7c8790" /><rect x="2" y="2" width="12" height="5" fill="#5cc8ee" /><g fill="#e8eef2"><rect x="2" y="9" width="3" height="3" /><rect x="6.500" y="9" width="3" height="3" /><rect x="11" y="9" width="3" height="3" /><rect x="2" y="14" width="3" height="3" /><rect x="6.500" y="14" width="3" height="3" /><rect x="2" y="19" width="3" height="3" /><rect x="6.500" y="19" width="3" height="3" /></g><rect x="11" y="14" width="3" height="9" fill="#26527c" /></svg> },
  { key: "wechat", el: <svg width="26" height="24" viewBox="0 0 26 24"><ellipse cx="10" cy="10" rx="9" ry="8" fill="#2dc84d" /><path d="M5 15l-1 5 5-3z" fill="#2dc84d" /><ellipse cx="18" cy="15" rx="7" ry="6" fill="#eef2ee" /><path d="M21 19l2 4-5-3z" fill="#eef2ee" /><circle cx="7" cy="8" r="1.200" fill="#143" /><circle cx="13" cy="8" r="1.200" fill="#143" /></svg> },
  { key: "suntou", el: <SunLogo />, on: true },
  { key: "wps", el: <svg width="22" height="22" viewBox="0 0 22 22" fill="none"><path d="M2 4l5 16 4-9 4 9 5-16" stroke="#e8282a" strokeWidth="3.500" /></svg> },
  { key: "pin", el: <svg width="22" height="32" viewBox="0 0 22 32" fill="none"><path d="M10 2l5 6-4 12-2-10z" fill="#e8405a" /><path d="M3 22c5 5 14 2 17-8" stroke="#f2c230" strokeWidth="3" /><path d="M4 18c0-5 2-8 5-10" stroke="#2a8fe0" strokeWidth="3" /><path d="M8 28c6 1 10-3 12-8" stroke="#2a8fe0" strokeWidth="2" /></svg> },
  { key: "photo", el: <svg width="20" height="30" viewBox="0 0 20 30"><path d="M10 2l8 5v21H2V7z" fill="#2a8fe8" /><path d="M2 28l8-13 8 13z" fill="#9ed8fa" /><circle cx="10" cy="10" r="2" fill="#fff" /></svg> },
  { key: "suntou2", el: <SunLogo /> },
];

export default function App() {
  return (
    <div className="relative w-[1920px] h-[1080px] flex flex-col overflow-hidden bg-[#efefef] text-black [font-family:'Noto_Sans','Noto_Sans_CJK_SC',sans-serif]">
      <svg width="0" height="0" className="absolute">
        <defs>
          <linearGradient id="bladeGrad" x1="0" x2="1" y1="0" y2="0">
            <stop offset="0" stopColor="#666" />
            <stop offset="0.5" stopColor="#eee" />
            <stop offset="1" stopColor="#999" />
          </linearGradient>
          <linearGradient id="rainbowGrad" x1="0" x2="0" y1="0" y2="1">
            <stop offset="0" stopColor="#ee3b3b" />
            <stop offset="0.33" stopColor="#f2c230" />
            <stop offset="0.66" stopColor="#3cc05a" />
            <stop offset="1" stopColor="#3a6fe0" />
          </linearGradient>
          <linearGradient id="cylGrad" x1="0" x2="1" y1="0" y2="0">
            <stop offset="0" stopColor="#666" />
            <stop offset="0.55" stopColor="#bdbdbd" />
            <stop offset="1" stopColor="#6a6a6a" />
          </linearGradient>
          <linearGradient id="coneGrad" x1="0" x2="1" y1="0" y2="0">
            <stop offset="0" stopColor="#6b6b6b" />
            <stop offset="1" stopColor="#a8a8a8" />
          </linearGradient>
          <linearGradient id="tubeGrad" x1="0" x2="1" y1="0" y2="0">
            <stop offset="0" stopColor="#8a8a8a" />
            <stop offset="0.5" stopColor="#e8e8e8" />
            <stop offset="1" stopColor="#8a8a8a" />
          </linearGradient>
          <linearGradient id="greenGrad" x1="0" x2="1" y1="0" y2="0">
            <stop offset="0" stopColor="#10d010" />
            <stop offset="1" stopColor="#0a800a" />
          </linearGradient>
        </defs>
      </svg>

      {/* title bar */}
      <div className="relative h-[30px] bg-white flex items-center shrink-0">
        <div className="absolute left-[808px] top-0 w-[62px] h-[1px] bg-[#0a78d8]" />
        <div className="absolute left-[870px] top-0 w-[75px] h-[1px] bg-[#e3e3e3]" />
        <div className="ml-[2px] mt-[-3px]">
          <SunLogo />
        </div>
        <span className="ml-[6px] text-[15px] leading-none">suntou</span>
        <div className="ml-auto flex items-center h-full pr-[2px]">
          <div className="w-[58px] flex justify-center">
            <div className="w-[11px] h-[1px] bg-black" />
          </div>
          <div className="w-[59px] flex justify-center">
            <svg width="12" height="12" viewBox="0 0 12 12" fill="none">
              <path d="M3.500 2.500V.5h8v8h-2M.5 2.500h9v9h-9z" stroke="#111" />
            </svg>
          </div>
          <div className="w-[59px] flex justify-center">
            <svg width="13" height="13" viewBox="0 0 13 13" fill="none">
              <path d="M.5.5l12 12M12.500.5l-12 12" stroke="#111" />
            </svg>
          </div>
        </div>
      </div>

      {/* menu */}
      <div className="h-[24px] bg-white flex items-center shrink-0 pb-[2px]">
        {["文件", "设备", "工具", "视图", "手柄", "仿真", "设置", "评定", "调试", "规划", "叶片"].map((m) => (
          <span key={m} className="w-[46px] pl-[8px] text-[15px] leading-none">
            {m}
          </span>
        ))}
      </div>

      {/* toolbar */}
      <div className="h-[42px] flex items-center border-t border-[#e8e8e8] border-b-2 border-b-[#c4c4c4] shrink-0 bg-[#efefef]">
        <Handle />
        <Tool><NewDoc /></Tool>
        <Tool><OpenDoc /></Tool>
        <Tool><SaveDoc /></Tool>
        <Sep />
        <Handle />
        <Tool><RobotTool /></Tool>
        <Tool><Plug /></Tool>
        <Tool on><MonitorArm /></Tool>
        <Tool w="w-[36px]" />
        <Tool><PowerBtn /></Tool>
        <Tool><SearchBtn /></Tool>
        <Sep />
        <Handle />
        {["left", "right", "top", "bottom", "front", "back", "solid"].map((f) => (
          <Tool key={f}><Cube face={f} /></Tool>
        ))}
        <Tool><HexCube /></Tool>
        <Tool><Shield /></Tool>
        <Tool><HexWire /></Tool>
        <Tool><FitWin /></Tool>
        <Tool><CamDoc /></Tool>
        <Sep />
        <Handle />
        <Tool><CurveDots /></Tool>
        <Sep />
        <Handle />
        <Tool><Cmm /></Tool>
        <Tool><ProbeA /></Tool>
        <Tool><ProbeB /></Tool>
        <Tool><ProbeC /></Tool>
        <Tool on><EyeSlash /></Tool>
        <Sep />
        <Handle />
        <Tool><CircleArm /></Tool>
        <Tool><DownPlane /></Tool>
        <Tool><Rings /></Tool>
        <Tool on><CmmArrow /></Tool>
        <Tool on><RedX /></Tool>
        <Sep />
        <Handle />
        <Tool><Blade accent="dots" /></Tool>
        <Tool><Blade accent="red" /></Tool>
        <Tool><Blade accent="blue" /></Tool>
        <Tool><GearScan /></Tool>
      </div>

      {/* main */}
      <div className="h-[635px] flex shrink-0">
        <div className="w-[788px] shrink-0 pt-[1px]">
          <DockTitle title="双数据区" w="w-[782px]" />
          <div className="flex">
            {/* left panel */}
            <div className="w-[395px] shrink-0 pl-[2px]">
              <div className="h-[44px] pt-[6px] pl-[5px] flex">
                <Tool on><DataIco /></Tool>
                <Tool><AxisIco /></Tool>
                <Tool><TreeIco /></Tool>
                <Tool><ProbeB s={32} /></Tool>
                <Tool><ReportIco dim /></Tool>
                <Tool><CompassIco /></Tool>
              </div>
              <div className="w-[388px] h-[560px] border-2 border-[#8a8f98] flex bg-white">
                <div className="flex-1 min-w-0 overflow-hidden">
                  <div className="h-[30px] flex border-b-2 border-[#8f8f8f] text-[15px]">
                    <div className="w-[130px] border-r-2 border-[#8f8f8f] flex items-center pl-[5px]">理论</div>
                    <div className="flex-1 flex items-center pl-[5px]">实际</div>
                  </div>
                  <div className="h-[22px] flex items-center text-[15px]">
                    <svg className="ml-[1px]" width="13" height="8" viewBox="0 0 13 8" fill="none">
                      <path d="M1.500 1.500l5 5 5-5" stroke="#444" strokeWidth="1.700" />
                    </svg>
                    <div className="ml-[14px] w-[6px] h-[6px] rounded-full bg-[#33465a]" />
                    <span className="ml-[15px]">点</span>
                  </div>
                  <Row2 a="v_point_1" b="v_point_1" ca="text-[#a0a0a0]" cb="text-[#add8e6]" />
                  {points.map((n) => (
                    <Row2
                      key={n}
                      a={`nv_point_${n}`}
                      b={`nv_point_${n}`}
                      ca="text-black"
                      cb="text-[#1414ff]"
                      hi={n === 2}
                    />
                  ))}
                  <Row2 a="nv_point_26" ca="text-[#a0a0a0]" />
                  <Row2 a="nv_point_27" ca="text-[#a0a0a0]" />
                </div>
                <ScrollBar top={21} h={113} />
              </div>
            </div>
            {/* right panel */}
            <div className="w-[387px] shrink-0">
              <div className="h-[44px] pt-[6px] pl-[5px] flex">
                <Tool><DataIco dim /></Tool>
                <Tool><AxisIco /></Tool>
                <Tool><TreeIco /></Tool>
                <Tool><ProbeB s={32} /></Tool>
                <Tool on><ReportIco /></Tool>
                <Tool><CompassIco /></Tool>
              </div>
              <div className="h-[560px] border border-[#a9a9a9] flex flex-col">
                <div className="h-[40px] shrink-0 flex items-center pl-[3px]">
                  <Tool>
                    <svg width="20" height="26" viewBox="0 0 20 26">
                      <path d="M1 1l18 12L1 25z" fill="#2d4059" />
                    </svg>
                  </Tool>
                  <Tool><RecBtn /></Tool>
                  <Tool><Steps /></Tool>
                  <Tool><Bin /></Tool>
                  <Tool><Mag /></Tool>
                  <Tool><RunReport /></Tool>
                </div>
                <div className="flex-1 min-h-0 flex">
                  <div className="w-[35px] shrink-0 flex flex-col items-center pt-[1px]">
                    <div className="w-[32px] h-[31px] bg-[#cfe5f7] border border-[#99c9ef] flex items-center justify-center">
                      <ArmIco />
                    </div>
                    <div className="h-[31px] flex items-center justify-center"><Joy s={26} /></div>
                    <div className="h-[31px] flex items-center justify-center"><BookIco /></div>
                    <div className="h-[31px] flex items-center justify-center"><PencilDoc /></div>
                  </div>
                  <div className="w-[349px] border-2 border-[#8a8f98] flex bg-white overflow-hidden">
                    <div className="w-[25px] shrink-0 bg-[#d9d9d9]" />
                    <div className="flex-1 min-w-0 overflow-hidden">
                      {rows.map((r, i) => (
                        <div key={i} className="h-[20px] flex items-center whitespace-nowrap text-[14px] leading-none">
                          <span className="w-[34px] pl-[3px] shrink-0 text-[15px] text-[#0000ff]">{i + 1}</span>
                          {r.i ? (
                            <>
                              <span className="w-[20px] h-[20px] shrink-0 flex items-center justify-center">{r.i}</span>
                              <span className={`ml-[6px] ${r.c}`}>{r.t}</span>
                            </>
                          ) : (
                            <span className={r.c}>{r.t}</span>
                          )}
                        </div>
                      ))}
                    </div>
                    <ScrollBar top={20} h={154} />
                  </div>
                </div>
              </div>
            </div>
          </div>
        </div>

        {/* model view */}
        <div className="flex-1 min-w-0 flex flex-col">
          <div className="h-[22px] flex shrink-0 text-[15px] leading-none">
            <div className="w-[92px] bg-white border border-[#d8d8d8] border-b-0 flex items-center justify-center">模型视图</div>
            <div className="w-[85px] mt-[1px] bg-[#eeeeee] border border-[#d8d8d8] flex items-center justify-center">报告视图</div>
          </div>
          <div className="h-[607px] bg-white border border-[#d9d9d9] flex shrink-0">
            <div className="relative w-[1071px] h-[605px] bg-[linear-gradient(#008080,#fffdf0)] shrink-0">
              <svg className="absolute inset-0" width="1071" height="605" viewBox="789 118 1071 605">
                <Model />
                <Triad />
              </svg>
            </div>
            <div className="flex-1 flex flex-col pt-[2px]">
              {ViewIcons.map((v, i) => (
                <div key={i} className="h-[36px] shrink-0 flex items-center pl-[13px] relative">
                  <div className={`flex items-center justify-center w-[30px] h-[30px] ${v.bg ? "bg-[#efefef]" : ""}`}>{v.el}</div>
                  {v.drop && <div className="absolute left-[44px] top-[16px] border-x-[4px] border-x-transparent border-t-[4px] border-t-black" />}
                </div>
              ))}
            </div>
          </div>
        </div>
      </div>

      {/* bottom docks */}
      <div className="h-[311px] flex shrink-0 pt-[1px]">
        <div className="w-[1246px] shrink-0">
          <DockTitle title="设置" w="w-[1240px]" />
          <div className="flex pl-[3px]">
            <div className="mt-[5px] grid grid-cols-[53px_53px] gap-x-[7px] grid-rows-[78px_79px_78px] gap-y-[7px]">
              <SideBtn label={<>特征<br />操作</>} />
              <SideBtn on label={<>特征<br />创建</>} />
              <SideBtn label="测头" />
              <SideBtn label="量规" />
              <SideBtn label="坐标系" />
              <SideBtn label="设备" />
            </div>
            <div className="ml-[10px] mt-[4px] w-[1111px]">
              <div className="h-[23px] flex items-end text-[15px] leading-none">
                <div className="w-[46px] h-[23px] bg-white flex items-center justify-center">点</div>
                {featureTabs.map(([t, w]) => (
                  <div key={t} className={`${w} h-[21px] bg-[#f0f0f0] border border-l-0 border-[#d9d9d9] flex items-center justify-center`}>
                    {t}
                  </div>
                ))}
              </div>
              <div className="h-[226px] bg-white border-b-2 border-[#dcdcdc] pl-[13px] pt-[12px] flex items-start text-[15px] leading-none">
                <div className="w-[400px] h-[201px] border-2 border-[#8a8f98] shrink-0">
                  <div className="flex h-[29px]">
                    {tableCols.map(([t, w], i) => (
                      <div
                        key={t}
                        className={`${w} h-full flex items-center pl-[5px] ${i < 6 ? "border-r border-[#e3e3e3]" : ""}`}
                      >
                        {t}
                      </div>
                    ))}
                  </div>
                </div>
                <div className="w-[207px] ml-[6px] shrink-0">
                  <div className="flex items-center h-[21px]">
                    <span className="w-[36px]">参考</span>
                    <div className="flex-1 h-full bg-white border-2 border-[#8a8f98] border-r-[#9a9a9a]" />
                  </div>
                  <div className="flex items-center h-[20px] mt-[6px]">
                    <span className="w-[105px]">点在面上阈值</span>
                    <div className="w-[102px] h-full border-2 border-[#8a8f98] flex items-center pl-[1px] justify-between [font-family:'Liberation_Mono',monospace] text-[14px] tracking-[1px]">
                      0.00500
                      <div className="flex flex-col gap-[1px] w-[15px] h-full shrink-0 py-[1px] pr-[1px]">
                        <div className="flex-1 bg-[#e8e8e8] flex items-center justify-center">
                          <div className="border-x-[3.500px] border-x-transparent border-b-[4px] border-b-black" />
                        </div>
                        <div className="flex-1 bg-[#e8e8e8] flex items-center justify-center">
                          <div className="border-x-[3.500px] border-x-transparent border-t-[4px] border-t-black" />
                        </div>
                      </div>
                    </div>
                  </div>
                  <div className="flex justify-end mt-[8px] pr-[1px]">
                    <FormBtn label="估计法向" />
                  </div>
                </div>
                <div className="ml-[7px] mt-[1px] flex flex-col gap-[8px] shrink-0">
                  {["手动测量", "添加选中", "导入", "新建", "从特征"].map((b) => (
                    <FormBtn key={b} label={b} />
                  ))}
                </div>
                <div className="ml-[8px] mt-[174px] shrink-0">
                  <FormBtn label="创建" />
                </div>
              </div>
            </div>
          </div>
        </div>

        <div className="w-[304px] shrink-0">
          <DockTitle title="运行日志" w="w-[298px]" />
          <div className="flex h-[25px] ml-[3px] items-end text-[15px] leading-none">
            <div className="w-[75px] h-[22px] bg-[#f0f0f0] border border-[#dcdcdc] flex items-center justify-center gap-[3px]">
              <span className="w-[16px] h-[16px] rounded-full bg-[#e8332a] text-white text-[10px] font-bold flex items-center justify-center">✕</span>
              错误
            </div>
            <div className="w-[79px] h-[22px] bg-[#f0f0f0] border border-l-0 border-[#dcdcdc] flex items-center justify-center gap-[3px]">
              <svg width="16" height="16" viewBox="0 0 16 16">
                <path d="M8 1l7 14H1z" fill="#f5c518" stroke="#c59a10" strokeWidth="0.500" />
                <path d="M8 6v5M8 12v1.500" stroke="#111" strokeWidth="1.300" />
              </svg>
              警告
            </div>
            <div className="w-[79px] h-[25px] bg-white flex items-center justify-center gap-[3px]">
              <InfoIco s={16} />
              消息
            </div>
          </div>
          <div className="ml-[1px] w-[295px] h-[227px] border border-[#8f8f8f] bg-white flex outline-1 outline-[#dcdcdc]">
            <div className="flex-1 min-w-0 pl-[4px] text-[13.330px] [font-family:'Liberation_Mono','Noto_Sans_CJK_SC',monospace] whitespace-nowrap overflow-hidden">
              {logLines.map((l, i) => (
                <div key={i} className="h-[17px] leading-[17px]">
                  {l}
                </div>
              ))}
            </div>
            <ScrollBar top={182} h={22} />
          </div>
        </div>

        <div className="w-[370px] shrink-0">
          <DockTitle title="状态" w="w-[370px]" />
          <div className="flex">
            <div className="flex flex-col gap-[13px] pt-[19px] w-[293px]">
              {[
                ["X", "-501.5688"],
                ["Y", "-562.8312"],
                ["Z", "396.2446"],
              ].map(([a, v]) => (
                <div key={a} className="flex items-center h-[50px]">
                  <span className="w-[93px] pl-[24px] text-center text-[34px] leading-none [font-family:'Liberation_Sans',sans-serif]">{a}</span>
                  <div className="w-[200px] h-[50px] bg-black border-[3px] border-[#00a2cc] flex items-center justify-end pr-[4px] overflow-hidden">
                    <span className="text-[46px] leading-none font-thin tracking-[-3.500px] text-[#39e6ee] [font-family:'Roboto',sans-serif] [text-shadow:1px_1px_0_#1aa0a8]">
                      {v}
                    </span>
                  </div>
                </div>
              ))}
            </div>
            <div className="w-[72px] flex flex-col items-center text-[15px] leading-none">
              <div className="mt-[17px] w-[20px] h-[20px] rounded-full bg-[#00ff00]" />
              <div className="mt-[3px] h-[20px] flex items-center">设备状态</div>
              <div className="mt-[10px] w-[43px] h-[38px] bg-[#e1e1e1] border border-[#adadad] flex items-center justify-center">
                <div className="w-[33px] h-[33px] bg-[#d8201c] [clip-path:polygon(30%_0,70%_0,100%_30%,100%_70%,70%_100%,30%_100%,0_70%,0_30%)] flex items-center justify-center text-white text-[13px] font-bold leading-none [font-family:'Liberation_Sans',sans-serif] scale-x-[0.85]">
                  STOP
                </div>
              </div>
              <div className="mt-[4px] h-[20px] flex items-center">停止运行</div>
              <div className="mt-[9px] w-[43px] h-[38px] bg-[#e1e1e1] border border-[#adadad] flex items-center justify-center">
                <div className="w-[33px] h-[33px] bg-[#16384a] rounded-[2px] flex items-center justify-center">
                  <svg width="26" height="26" viewBox="0 0 26 26" fill="none">
                    <path d="M20 17a8 8 0 1 1 0-8" stroke="#2fa8dc" strokeWidth="4" />
                    <path d="M23 3v9h-9z" fill="#2fa8dc" />
                  </svg>
                </div>
              </div>
              <div className="mt-[5px] h-[20px] flex items-center">状态复位</div>
            </div>
          </div>
        </div>
      </div>

      {/* taskbar */}
      <div className="h-[38px] flex items-center shrink-0 bg-[linear-gradient(90deg,#223a46,#1b2e44)] text-white">
        <div className="w-[44px] h-full flex items-center justify-center">
          <svg width="20" height="20" viewBox="0 0 20 20">
            <path d="M0 3l8-1v7.500H0zM9 1.800L20 0v9.500H9zM0 10.500h8V18l-8-1zM9 10.500h11V20L9 18.200z" fill="#fff" />
          </svg>
        </div>
        <div className="w-[44px] h-full flex items-center justify-center">
          <svg width="20" height="22" viewBox="0 0 20 22" fill="none">
            <circle cx="12" cy="8.500" r="6.500" stroke="#fff" strokeWidth="1.800" />
            <path d="M8 14l-6 7" stroke="#fff" strokeWidth="2" />
          </svg>
        </div>
        <div className="w-[48px] h-full flex items-center justify-center">
          <svg width="20" height="20" viewBox="0 0 20 20" fill="none">
            <path d="M0 1h11M0 19h11M0 6h11v8H0M15 1h4M15 7h3M15 13h3M17 1v18" stroke="#fff" strokeWidth="1.200" />
          </svg>
        </div>
        <div className="w-[2px]" />
        {taskIcons.map((t) => (
          <div key={t.key} className={`relative w-[46px] h-full flex items-center justify-center ${t.on ? "bg-[#465b64]" : ""}`}>
            {t.el}
            <div className="absolute left-[6px] right-[6px] bottom-0 h-[2px] bg-[#74b6e0]" />
          </div>
        ))}
        <div className="ml-auto flex items-center h-full pr-[16px] text-[15px] leading-none">
          <div className="w-[28px] flex justify-center">
            <svg width="16" height="9" viewBox="0 0 16 9" fill="none">
              <path d="M1 8l7-7 7 7" stroke="#fff" strokeWidth="1.200" />
            </svg>
          </div>
          <div className="w-[30px] flex justify-center relative">
            <svg width="20" height="20" viewBox="0 0 20 20" fill="none">
              <path d="M1 4l14-3v17H1z" stroke="#dde" />
              <path d="M5 12c0-4 3-6 6-5M11 12c0 2-3 3-5 2" stroke="#dde" strokeWidth="1.400" />
            </svg>
            <div className="absolute right-[3px] bottom-[-3px] w-[9px] h-[9px] rounded-full bg-[#2872c8]" />
          </div>
          <div className="w-[32px] flex justify-center">
            <svg width="20" height="14" viewBox="0 0 20 14" fill="none">
              <rect x="1" y="3" width="16" height="10" stroke="#fff" />
              <rect x="2" y="4" width="14" height="8" fill="#fff" />
              <path d="M18 6v4" stroke="#fff" strokeWidth="1.500" />
            </svg>
          </div>
          <div className="w-[28px] flex justify-center">
            <svg width="20" height="16" viewBox="0 0 20 16" fill="none">
              <path d="M1 5h3l4-4v14l-4-4H1zM11 4c2 2 2 6 0 8M14 2c3 3 3 9 0 12" stroke="#fff" />
            </svg>
          </div>
          <div className="w-[30px] flex justify-center">
            <svg width="18" height="16" viewBox="0 0 18 16" fill="none">
              <path d="M1 15C1 8 7 2 16 2M5 15c0-5 4-9 11-9M9 15c0-3 2-5 7-5" stroke="#fff" />
              <circle cx="15" cy="14" r="1.500" fill="#fff" />
            </svg>
          </div>
          <div className="w-[28px] text-center text-[17px]">英</div>
          <div className="w-[46px] flex justify-center">
            <div className="w-[19px] h-[19px] bg-[#f5f5f5] text-black text-[14px] flex items-center justify-center">拼</div>
          </div>
          <div className="w-[58px] text-center text-[15px] [font-family:'Liberation_Sans',sans-serif]">21:51</div>
          <div className="w-[50px] flex justify-center">
            <svg width="20" height="20" viewBox="0 0 20 20" fill="none">
              <path d="M0 1h20v14h-7l-3 4-3-4H0z" fill="#fff" />
              <path d="M4 5h12M4 8h12M4 11h8" stroke="#22364a" />
            </svg>
          </div>
        </div>
      </div>

      {/* watermark sits over the tray */}
      <div className="absolute left-[1626px] top-[1026px] text-[36px] leading-[40px] text-white/50 whitespace-nowrap [font-family:'Liberation_Sans','Noto_Sans_CJK_SC',sans-serif] [-webkit-text-stroke:1px_rgba(120,130,140,0.5)]">
        CSDN @山涧果子
      </div>
    </div>
  );
}

function Row2({ a, b, ca, cb, hi = false }: { a: string; b?: string; ca: string; cb?: string; hi?: boolean }) {
  return (
    <div className="h-[22px] flex items-center whitespace-nowrap text-[15.500px] leading-none">
      <div className={`ml-[30px] flex-1 h-full flex items-center ${hi ? "bg-[#e3f1fc]" : ""}`}>
        <span className={`w-[103px] pl-[3px] shrink-0 ${ca}`}>{a}</span>
        {b && <span className={cb}>{b}</span>}
      </div>
    </div>
  );
}
